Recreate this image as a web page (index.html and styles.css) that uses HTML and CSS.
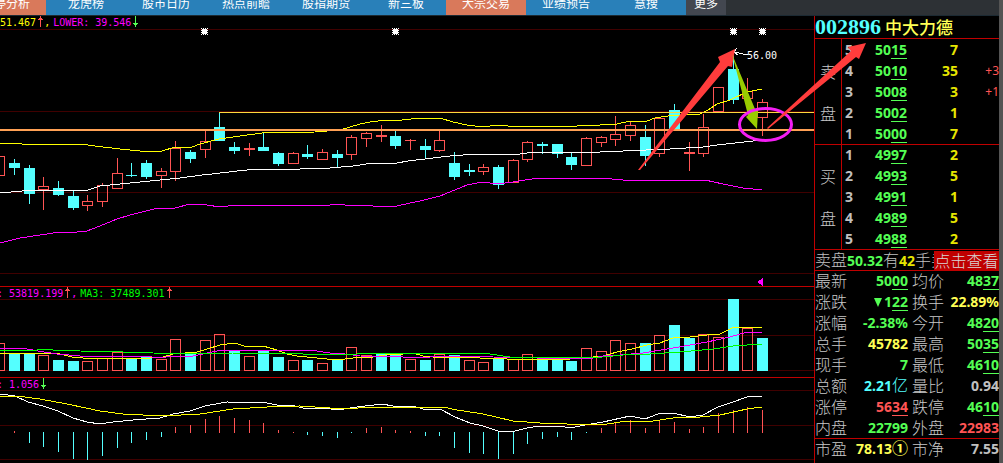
FILE: index.html
```html
<!DOCTYPE html>
<html lang="zh-CN">
<head>
<meta charset="utf-8">
<title>002896 中大力德</title>
<link rel="stylesheet" href="styles.css">
</head>
<body>
<div class="app">
  <nav class="tabs">
    <a class="tab tab-hot tab-first" href="#">涨停分析</a>
    <a class="tab" href="#">龙虎榜</a>
    <a class="tab" href="#">股市日历</a>
    <a class="tab" href="#">热点前瞻</a>
    <a class="tab" href="#">股指期货</a>
    <a class="tab" href="#">新三板</a>
    <a class="tab tab-hot" href="#">大宗交易</a>
    <a class="tab" href="#">业绩预告</a>
    <a class="tab" href="#">慧搜</a>
    <button class="tab tab-more" type="button">更多</button>
  </nav>
  <main class="main">
    <div class="charts">
      <section class="pane">
        <div class="legend yellow">
          <span>51.467</span><svg class="arr" viewBox="0 0 7 12"><path d="M3.5 0v11M1 3.500h5M2 2.500h3" stroke="#ff5454"/></svg><span class="comma">,</span><span class="magenta">LOWER: 39.546</span><svg class="arr" viewBox="0 0 7 12"><path d="M3.5 0v11M1 7.500h5M2 8.500h3" stroke="#54ff54"/></svg>
        </div>
        <svg class="plot" viewBox="0 29 814 257">
          <path class="grid" d="M0 29.5H814M0 111.5H814M0 192.5H814M0 273.5H814"/>
          <g id="candles"></g>
          <path class="ln y" d="M0 144L8 143L22 144H80L95 146L120 149L140 151L162 151L175 147H192L200 144L219 139L240 136L262 133L315 132L340 130L350 127L360 124L370 122L387 120L402 120L420 118H440L453 122L467 125L483 127L497 125H503L508 126H577L582 125H600L617 124L630 121H647L655 118L668 116L700 114L708 110L717 104L730 100L747 92L762 89"/>
          <path class="ln w" d="M0 193L22 191L50 190H88L100 186L120 184L150 181L180 178L202 175L212 174L237 171L257 169H300L330 168L353 166L373 163H397L408 161L433 158L450 156L477 154H520L535 152H600L623 151L670 149L703 147L717 145L762 140"/>
          <path class="ln m" d="M0 243L20 238L40 235L60 232L68 233L87 231L100 226L117 219L130 215L158 208H175L190 204L207 205L220 207L228 206L257 205H330L340 204L345 205L373 206H397L410 203L420 201L440 196L467 185L482 182L497 184L513 182L538 178H600L623 180H705L723 184L743 188L762 190"/>
          <path d="M219 112.5H814" stroke="#ffd83c"/>
          <path d="M0 130H814" stroke="#ffa054" stroke-width="2"/>
          <g fill="#fff">
            <path id="star" d="M201 28h1v1h1v-1h1v1h1v-1h1v1h1v-1h1v1h-1v1h1v1h-1v1h1v1h-1v1h1v1h-1v-1h-1v1h-1v-1h-1v1h-1v-1h-1v1h-1v-1h1v-1h-1v-1h1v-1h-1v-1h1v-1h-1z"/>
            <use href="#star" x="191"/><use href="#star" x="529"/><use href="#star" x="558"/>
          </g>
          <path class="ln w" d="M748 55L734 52M734 52L737 48M734 52L738 55"/>
          <text class="peak" x="747" y="59">56.00</text>
          <path d="M757 282l6-4v8z" fill="#f0f"/>
        </svg>
      </section>
      <section class="pane ruled">
        <div class="legend magenta cut">
          <span>: 53819.199</span><svg class="arr" viewBox="0 0 7 12"><path d="M3.5 0v11M1 3.500h5M2 2.500h3" stroke="#ff5454"/></svg><span class="comma">,</span><span class="green">MA3: 37489.301</span><svg class="arr" viewBox="0 0 7 12"><path d="M3.5 0v11M1 3.500h5M2 2.500h3" stroke="#ff5454"/></svg>
        </div>
        <svg class="plot" viewBox="0 299 814 78">
          <path class="grid" d="M0 299.5H814M0 335.5H814M0 370.5H814"/>
          <g id="volume"></g>
          <path class="ln y" d="M0 353H52L60 354L72 357L83 358L100 359L120 358H150L163 357L173 354L197 352L207 349L220 345L235 343L247 347L263 346L277 350L287 354L297 356L317 358L337 360L353 358L373 357L385 355L403 354L413 353L423 356L433 357H463L480 358H503L507 359H570L593 357L603 356L617 352L632 349L647 345L660 343L673 338L690 337L707 335L720 334L732 328L762 327"/>
          <path class="ln m" d="M0 348H22L38 351L57 354L80 356H143L160 358L173 356H193L217 351L230 350H310L330 353L345 354L360 356L403 357H430L433 356H470L493 357L537 358H593L603 356L620 355L643 353L673 348L707 342L730 337L747 332H762"/>
          <path class="ln g" d="M0 351L8 350H37L50 349L53 350L80 351L123 352L153 353L200 354L233 353H270L303 354H357L360 353H462L490 354L510 357H540L567 358L603 357L623 355L650 354L680 352L713 349L733 346L762 344"/>
        </svg>
      </section>
      <section class="pane ruled">
        <div class="legend magenta cut">
          <span>: 1.056</span><svg class="arr" viewBox="0 0 7 12"><path d="M3.5 0v11M1 7.500h5M2 8.500h3" stroke="#54ff54"/></svg>
        </div>
        <svg class="plot" viewBox="0 390 814 73">
          <path class="grid" d="M0 390.5H814M0 425.5H814M0 459.5H814"/>
          <g id="macd"></g>
          <path class="ln w" d="M0 394L15 396L28 402L43 406L58 411L73 418L87 422L100 424L113 422L133 420L160 418L173 414L190 411L205 406L227 402L267 403L277 405L295 406L303 408H325L337 410L357 407L382 404L393 406H413L423 409H440L455 417L470 423L483 426L498 431H515L527 428L540 426H560L570 428L585 425L603 422L630 416L645 419L658 414L673 413L690 417L703 415L718 407L733 402L747 397L762 396"/>
          <path class="ln y" d="M0 396H17L40 399L67 404L100 411L123 414L163 416L200 414L233 409L267 407L300 406L330 408H358L365 407H443L457 410L483 414L513 421L540 423H565L567 424H607L627 421H653L673 418L700 417L720 415L747 409L762 407"/>
        </svg>
      </section>
    </div>

    <aside class="quote">
      <h1 class="title"><span class="code">002896</span><span class="name">中大力德</span></h1>
      <table class="book sell">
        <tr><th class="side" rowspan="5" scope="rowgroup"><span>卖</span><span>盘</span></th><td class="lv">5</td><td class="px">50<u>15</u></td><td class="qty">7</td><td class="chg"></td></tr>
        <tr><td class="lv">4</td><td class="px">50<u>10</u></td><td class="qty">35</td><td class="chg">+3</td></tr>
        <tr><td class="lv">3</td><td class="px">50<u>08</u></td><td class="qty">3</td><td class="chg">+1</td></tr>
        <tr><td class="lv">2</td><td class="px">50<u>02</u></td><td class="qty">1</td><td class="chg"></td></tr>
        <tr><td class="lv">1</td><td class="px">50<u>00</u></td><td class="qty">7</td><td class="chg"></td></tr>
      </table>
      <table class="book buy">
        <tr><th class="side" rowspan="5" scope="rowgroup"><span>买</span><span>盘</span></th><td class="lv">1</td><td class="px">49<u>97</u></td><td class="qty">2</td><td class="chg"></td></tr>
        <tr><td class="lv">2</td><td class="px">49<u>93</u></td><td class="qty">5</td><td class="chg"></td></tr>
        <tr><td class="lv">3</td><td class="px">49<u>91</u></td><td class="qty">1</td><td class="chg"></td></tr>
        <tr><td class="lv">4</td><td class="px">49<u>89</u></td><td class="qty">5</td><td class="chg"></td></tr>
        <tr><td class="lv">5</td><td class="px">49<u>88</u></td><td class="qty">2</td><td class="chg"></td></tr>
      </table>
      <div class="notice">
        <p class="msg">卖盘<b class="up">50.32</b>有<b class="gold">42</b>手卖</p>
        <button class="look" type="button">点击查看</button>
      </div>
      <table class="stats">
        <tr><th>最新</th><td class="up">50<u>00</u></td><th>均价</th><td class="up">48<u>37</u></td></tr>
        <tr><th>涨跌</th><td class="up"><span class="tri"></span>1<u>22</u></td><th>换手</th><td class="yel">22.89%</td></tr>
        <tr><th>涨幅</th><td class="up">-2.38%</td><th>今开</th><td class="up">48<u>20</u></td></tr>
        <tr><th>总手</th><td class="yel">45782</td><th>最高</th><td class="up">50<u>35</u></td></tr>
        <tr><th>现手</th><td class="up">7</td><th>最低</th><td class="up">46<u>10</u></td></tr>
        <tr><th>总额</th><td class="cy">2.21<span class="cn">亿</span></td><th>量比</th><td>0.94</td></tr>
        <tr><th>涨停</th><td class="red">56<u>34</u></td><th>跌停</th><td class="up">46<u>10</u></td></tr>
        <tr><th>内盘</th><td class="up">22799</td><th>外盘</th><td class="red">22983</td></tr>
        <tr class="split"><th>市盈</th><td class="yel">78.13<span class="cn mark">①</span></td><th>市净</th><td>7.55</td></tr>
      </table>
    </aside>

    <svg class="notes" width="1003" height="447" viewBox="0 16 1003 447">
      <path d="M638 170L720 62L718 57L735 49L732 67L728 66L640 170z" fill="#ff3c3c"/>
      <path d="M732 54L748 115L746 117L757 129L758 111L755 109z" fill="#9c0"/>
      <ellipse cx="765.5" cy="124.500" rx="26" ry="16" fill="none" stroke="#f41ef4" stroke-width="3"/>
      <path d="M767 128L851 51L848 47L866 43L859 59L856 57L768 129z" fill="#ff3c3c"/>
    </svg>
  </main>
</div>
<div class="edge"></div>
<script src="chart.js"></script>
</body>
</html>
```
FILE: styles.css
```css
* { box-sizing: border-box; }
body {
  margin: 0;
  height: 100vh;
  display: flex;
  overflow: hidden;
  background: #000;
  color: #c0c0c0;
  font: 16px/20px "Noto Sans CJK SC", sans-serif;
}
.app { flex: 1; min-width: 0; display: flex; flex-direction: column; }
.edge { width: 4px; background: #545454; }

.tabs {
  display: flex;
  height: 16px;
  flex: none;
  overflow: hidden;
  background: #2d3135;
  border-bottom: 1px solid #1c2a33;
}
.tab {
  flex: none;
  width: 80px;
  display: flex;
  justify-content: center;
  align-items: flex-end;
  padding: 0 0 5px;
  border: 0;
  background: #2980b9;
  color: #fff;
  text-decoration: none;
  font: 12px/14px "Noto Sans CJK SC", sans-serif;
  white-space: nowrap;
}
.tab-hot { background: #d9795b; }
.tab-first { margin-left: -34px; }
.tab-more { width: 40px; background: #434750; }

.main { flex: 1; display: flex; position: relative; min-height: 0; }
.charts { flex: 1; min-width: 0; overflow: hidden; }
.ruled { border-top: 1px solid #c00000; }
.legend {
  display: flex;
  height: 13px;
  font: 10px/13px "DejaVu Sans Mono", monospace;
  white-space: pre;
}
.ruled .legend { height: 12px; line-height: 14px; }
.cut { margin-left: -3px; }
.legend .comma { width: 9px; margin-left: -1px; }
.arr { width: 7px; height: 12px; margin: 0 1px; fill: none; shape-rendering: crispEdges; }
.yellow { color: #ff0; }
.magenta { color: #f0f; }
.green { color: #0f0; }

.plot { display: block; width: 100%; overflow: visible; shape-rendering: crispEdges; }
.grid { stroke: #400000; }
.ln { fill: none; stroke-width: 1; }
.y { stroke: #ff0; }
.w { stroke: #fff; }
.m { stroke: #f0f; }
.g { stroke: #0f0; }
.peak { fill: #fff; font: 10px "DejaVu Sans Mono", monospace; }
.rise { fill: none; stroke: #ff5454; }
.rise-line { stroke: #ff5454; }
.fall-line { stroke: #54ffff; }
.notes { position: absolute; left: 0; top: 0; pointer-events: none; }

.quote { width: 185px; flex: none; overflow: hidden; border-left: 1px solid #c00000; }
.title {
  display: flex;
  align-items: center;
  gap: 4px;
  height: 23px;
  margin: 0;
  border-bottom: 1px solid #c00000;
  white-space: nowrap;
}
.code { font: bold 22px/22px "Liberation Serif", serif; color: #54ffff; }
.name { font: 500 17px/22px "Noto Sans CJK SC", sans-serif; color: #ffff54; }

table { width: 100%; border-collapse: separate; border-spacing: 0; table-layout: fixed; }
th, td {
  height: 21px;
  padding: 0;
  font: bold 14px/20px "Noto Sans", "Noto Sans CJK SC", sans-serif;
  white-space: nowrap;
}
u { text-decoration: underline 1px; text-underline-offset: 3px; }
.book { border-bottom: 1px solid #c00000; }
.buy { height: 105px; }
.buy td { height: 20px; }
.side { width: 27px; border-right: 1px solid #c00000; }
.side span { display: block; line-height: 42px; }
.side, .stats th { font-family: "Noto Sans CJK SC", sans-serif; font-size: 16px; font-weight: 300; color: #c8c8c8; }
.lv { width: 20px; padding-left: 3px; }
.px { width: 45px; text-align: right; color: #54ff54; }
.qty { width: 51px; text-align: right; color: #e6e600; }
.chg { text-align: right; font-size: 12px; font-weight: 400; color: #ff5454; }

.notice { display: flex; height: 21px; border-bottom: 1px solid #c00000; }
.msg { flex: 1; min-width: 0; margin: 0; overflow: hidden; white-space: nowrap; font-weight: 300; line-height: 18px; }
.msg b { font: bold 14px/18px "Noto Sans", sans-serif; }
.look {
  width: 65px;
  flex: none;
  margin: 1px 0 0;
  padding: 0 0 2px;
  border: 0;
  background: #c00000;
  color: #d8d8d8;
  font: 300 16px/16px "Noto Sans CJK SC", sans-serif;
}
.stats th, .stats td { vertical-align: top; line-height: 19px; }
.stats td { text-align: right; }
.stats th { width: 36px; text-align: left; }
.stats th:first-child { width: 32px; }
.stats td:nth-child(2) { width: 61px; }
.stats th:nth-child(3) { padding-left: 4px; }
.stats tr:nth-child(8) > * { height: 20px; }
.split th, .split td { border-top: 1px solid #c00000; height: 22px; }
.cn { font: 300 16px/16px "Noto Sans CJK SC", sans-serif; }
.mark { font-weight: 700; }
.tri {
  display: inline-block;
  border: 4px solid transparent;
  border-top: 9px solid #54ff54;
  border-bottom: 0;
  margin-right: 2px;
}
.up { color: #54ff54; }
.gold { color: #e6e600; }
.yel { color: #ffff54; }
.cy { color: #54ffff; }
.red { color: #ff5454; }
```
FILE: chart.js
```js
// Each day: direction, high, body top, body bottom, low.
const candles = `r 156 156 176 176;f 159 163 168 175;f 165 168 194 204;r 177 186 190 210;f 181 188 195 196;f 191 196 208 210;r 195 201 206 211;r 183 185 202 207;r 158 173 189 189;f 163 175 176 177;f 160 163 177 179;r 168 171 176 188;r 141 148 172 181;f 150 152 159 163;r 131 141 150 158;f 112 127 141 141;f 142 147 151 154;r 143 148 150 156;f 133 147 151 151;f 152 153 164 166;r 152 153 164 164;f 145 154 157 159;r 149 152 160 160;f 150 154 158 167;r 135 137 155 160;r 132 133 139 147;r 125 135 137 142;f 131 136 146 149;r 139 140 141 150;f 139 146 150 159;r 131 140 151 152;f 152 163 177 180;f 164 170 172 176;r 164 167 172 175;f 165 167 185 189;r 159 160 183 183;r 141 142 160 162;f 142 144 146 154;f 144 144 154 158;f 153 157 165 170;r 137 138 166 166;r 136 137 143 147;r 116 134 140 146;r 121 125 136 141;f 125 137 156 166;r 118 118 154 157;f 104 110 130 130;r 142 152 154 171;r 114 127 154 157;r 87 87 112 112;f 52 69 100 104;r 78 91 99 99;r 99 102 118 136`;
// Volume bar: direction, top.
const volume = `r343 f353 f353 r355 f360 f361 r361 r358 r352 f358 f357 r359 r339 f353 r340 r334 f350 r356 f350 f357 r360 f360 r363 f360 r347 r355 f354 f354 r359 f360 r354 f355 r360 r362 f358 r359 r354 f359 f360 f361 r348 r351 r340 r343 f343 r335 f325 f338 r334 r337 f299 r328 f338`;
// Histogram bar: direction, far end.
const macd = `r433 r431 f443 f447 f452 f459 f460 f456 f448 f443 f440 f437 r427 r425 r419 r416 r418 r420 r423 r430 r432 f435 f436 f438 f433 r428 r427 r430 r431 f436 f436 f448 f453 f454 f459 f454 f444 f439 f437 f440 f433 r428 r423 r420 r428 r421 r422 r429 r427 r413 r410 r407 r410`;

const VOLUME_BASE = 371;
const dayX = i => Math.floor(14.667 * i - 0.2);

function line(dir, x, from, to) {
  const cls = dir === "r" ? "rise-line" : "fall-line";
  return to > from ? `<path class="${cls}" d="M${x + 0.5} ${from}V${to}"/>` : "";
}

function body(dir, x, top, bottom) {
  if (dir === "f" || bottom - top < 3) {
    const fill = dir === "f" ? "#54ffff" : "#ff5454";
    return `<rect x="${x - 5}" y="${top}" width="11" height="${bottom - top}" fill="${fill}"/>`;
  }
  return `<rect class="rise" x="${x - 4.5}" y="${top + 0.5}" width="10" height="${bottom - top - 1}"/>`;
}

document.getElementById("candles").innerHTML = candles.split(";").map((row, i) => {
  const [dir, ...v] = row.split(" ");
  const [high, top, bottom, low] = v.map(Number);
  const x = dayX(i);
  return line(dir, x, high, top) + body(dir, x, top, bottom) + line(dir, x, bottom, low);
}).join("");

document.getElementById("volume").innerHTML = volume.split(" ").map((v, i) =>
  body(v[0], dayX(i), Number(v.slice(1)), VOLUME_BASE)).join("");

document.getElementById("macd").innerHTML = macd.split(" ").map((v, i) => {
  const end = Number(v.slice(1));
  return v[0] === "r" ? line("r", dayX(i), end, 433) : line("f", dayX(i), 432, end);
}).join("");
```
